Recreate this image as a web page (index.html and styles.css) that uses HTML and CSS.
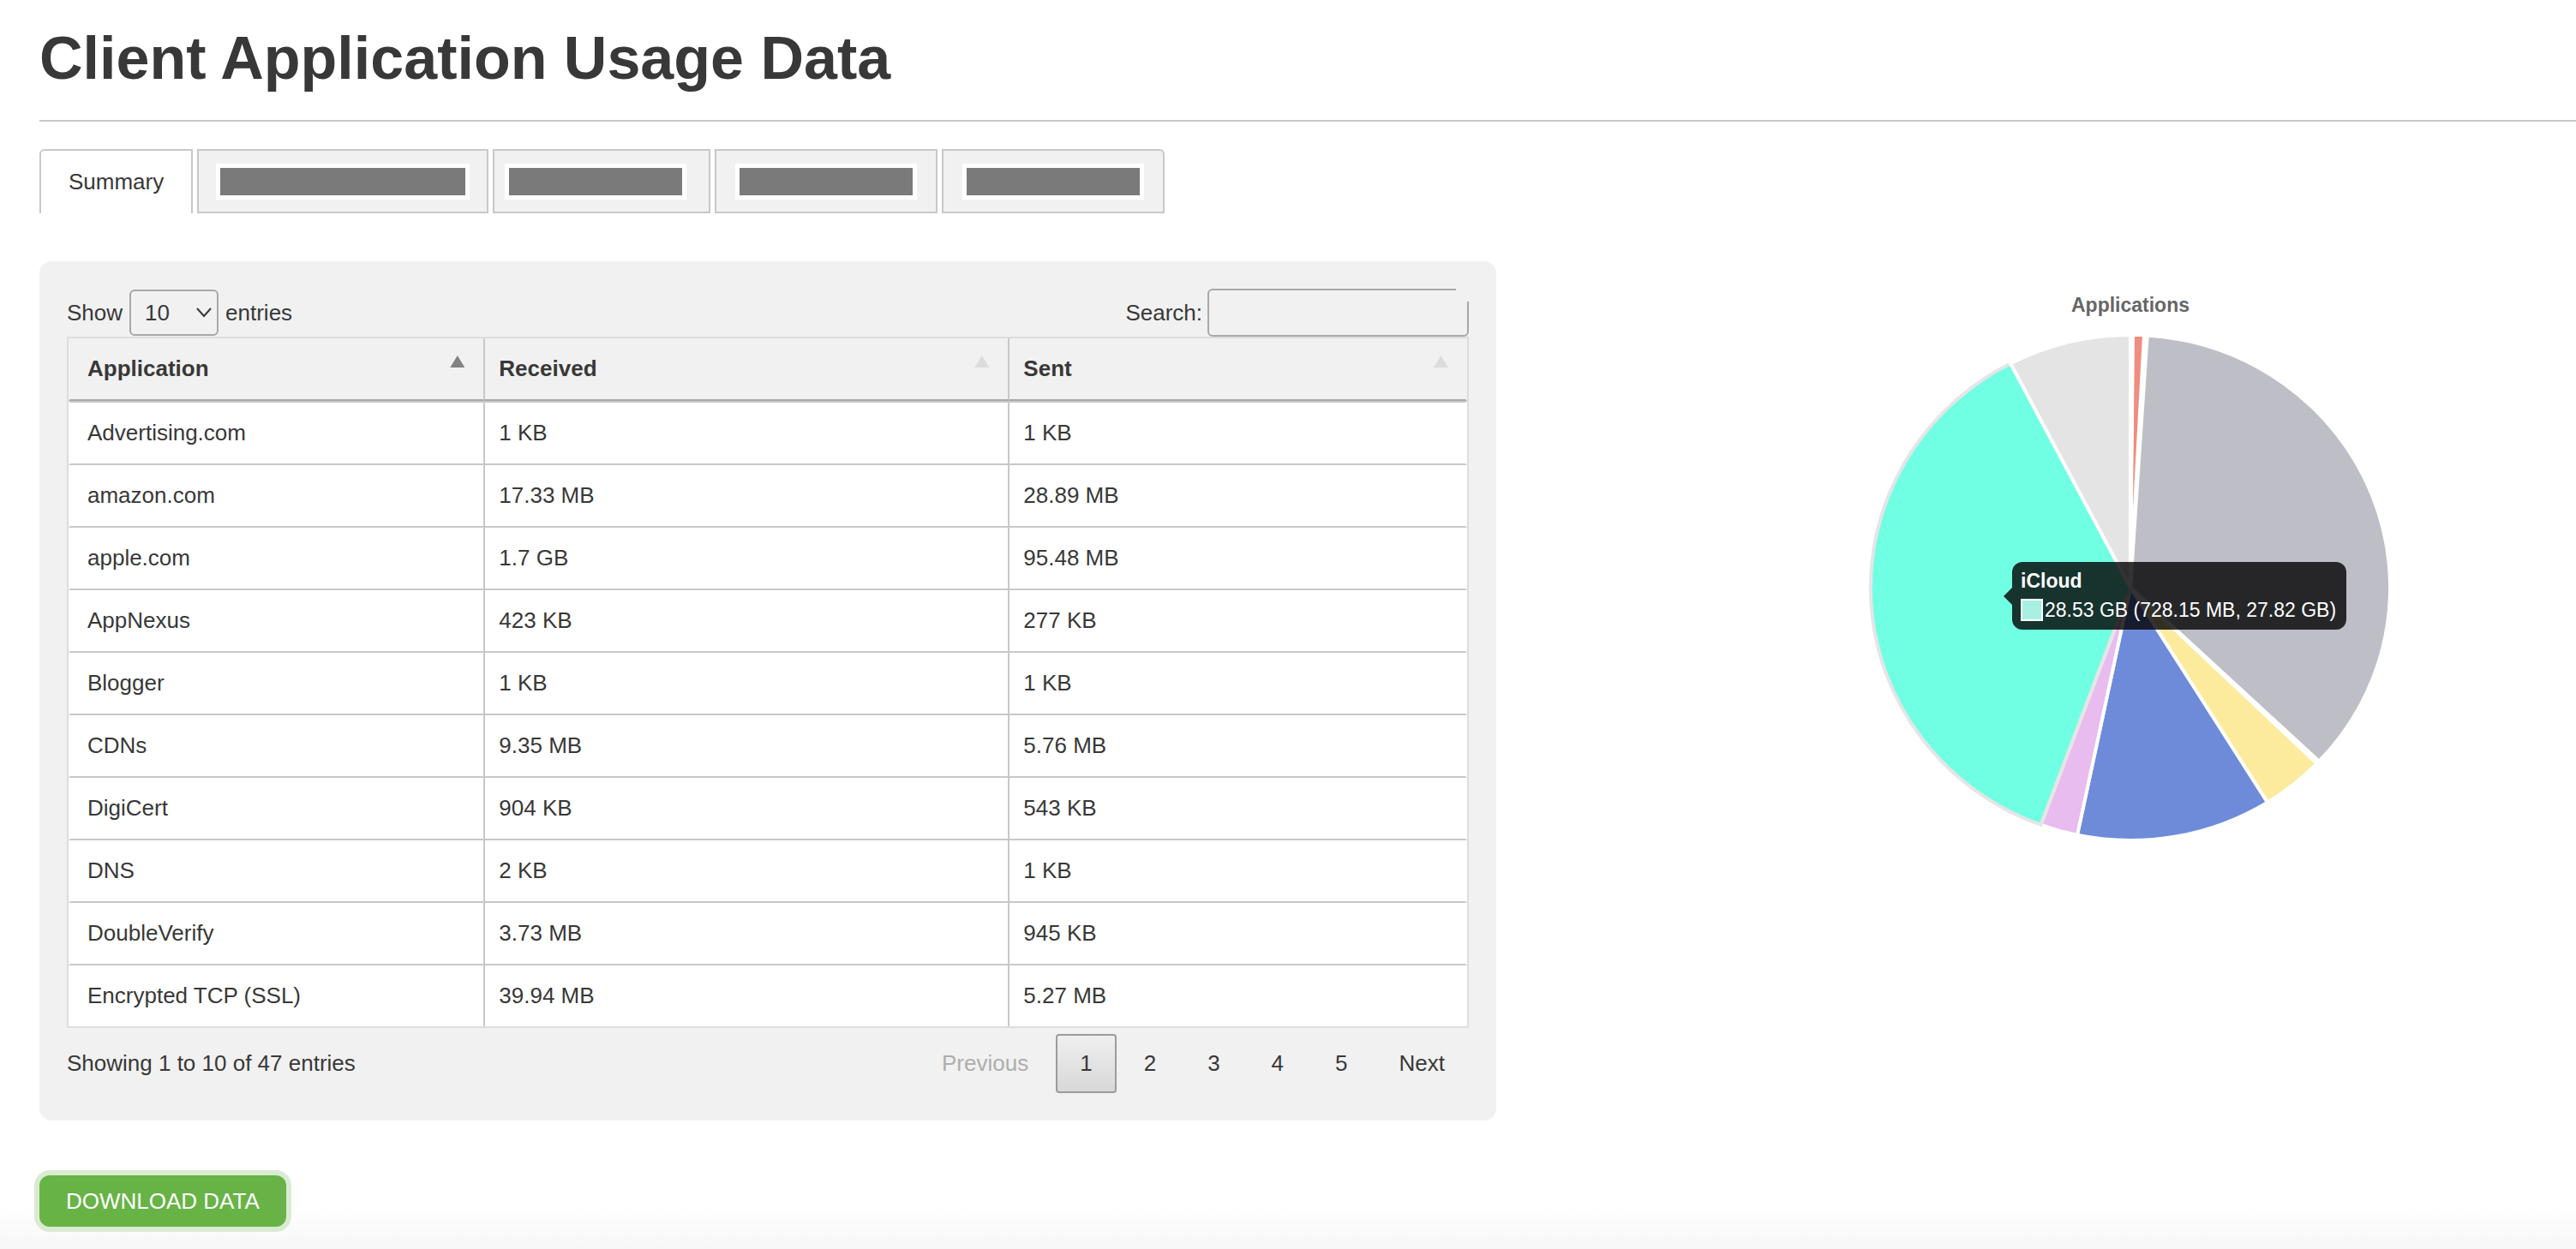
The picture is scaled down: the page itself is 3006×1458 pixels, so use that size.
FILE: index.html
```html
<!DOCTYPE html>
<html lang="en">
<head>
<meta charset="utf-8">
<meta name="viewport" content="width=device-width, initial-scale=1">
<title>Client Application Usage Data</title>
<link rel="stylesheet" href="styles.css">
</head>
<body>
<main class="page">
  <header class="page-header">
    <h1 class="page-title">Client Application Usage Data</h1>
  </header>

  <nav class="tabs">
    <button type="button" class="tab tab-active">Summary</button>
    <button type="button" class="tab tab-long"><span class="redacted redacted-long"></span></button>
    <button type="button" class="tab tab-shifted"><span class="redacted"></span></button>
    <button type="button" class="tab"><span class="redacted"></span></button>
    <button type="button" class="tab"><span class="redacted"></span></button>
  </nav>

  <div class="content">
    <section class="card">
      <div class="toolbar">
        <div class="length">
          <label for="length">Show</label>
          <span class="select-wrap">
            <select id="length" class="select">
              <option selected>10</option>
              <option>25</option>
              <option>50</option>
              <option>100</option>
            </select>
            <svg class="chevron" width="18" height="12" viewBox="0 0 18 12" fill="none" stroke="#383838" stroke-width="2"><path d="M1 1l8 9 8-9"/></svg>
          </span>
          <span>entries</span>
        </div>
        <div class="search">
          <label for="search">Search:</label>
          <span class="search-wrap"><input id="search" class="search-input" type="search"></span>
        </div>
      </div>

      <table class="table">
        <colgroup><col class="col-app"><col class="col-received"><col></colgroup>
        <thead>
          <tr>
            <th scope="col"><button type="button" class="sort sort-active">Application</button></th>
            <th scope="col"><button type="button" class="sort">Received</button></th>
            <th scope="col"><button type="button" class="sort">Sent</button></th>
          </tr>
        </thead>
        <tbody>
          <tr><td>Advertising.com</td><td>1 KB</td><td>1 KB</td></tr>
          <tr><td>amazon.com</td><td>17.33 MB</td><td>28.89 MB</td></tr>
          <tr><td>apple.com</td><td>1.7 GB</td><td>95.48 MB</td></tr>
          <tr><td>AppNexus</td><td>423 KB</td><td>277 KB</td></tr>
          <tr><td>Blogger</td><td>1 KB</td><td>1 KB</td></tr>
          <tr><td>CDNs</td><td>9.35 MB</td><td>5.76 MB</td></tr>
          <tr><td>DigiCert</td><td>904 KB</td><td>543 KB</td></tr>
          <tr><td>DNS</td><td>2 KB</td><td>1 KB</td></tr>
          <tr><td>DoubleVerify</td><td>3.73 MB</td><td>945 KB</td></tr>
          <tr><td>Encrypted TCP (SSL)</td><td>39.94 MB</td><td>5.27 MB</td></tr>
        </tbody>
      </table>

      <div class="footer">
        <div>Showing 1 to 10 of 47 entries</div>
        <div class="pager">
          <button type="button" class="page-button" disabled>Previous</button>
          <button type="button" class="page-button page-current">1</button>
          <button type="button" class="page-button">2</button>
          <button type="button" class="page-button">3</button>
          <button type="button" class="page-button">4</button>
          <button type="button" class="page-button">5</button>
          <button type="button" class="page-button">Next</button>
        </div>
      </div>
    </section>

    <section class="chart">
      <h2 class="chart-title">Applications</h2>
      <div class="chart-body">
        <svg class="pie" viewBox="0 0 620 600" stroke="#fff" stroke-width="4">
          <path fill="#f08c80" d="M310 300L313 5A303 295 0 0 1 326 5Z"/>
          <path fill="#bebec7" d="M310 300L329.700 5.600A303 295 0 0 1 530.200 502.700Z"/>
          <path fill="#fceb9d" d="M310 300L527.600 505.300A303 295 0 0 1 469.900 550.600Z"/>
          <path fill="#6e8bda" d="M310 300L469.900 550.600A303 295 0 0 1 248 588.800Z"/>
          <path fill="#e8bcee" d="M310 300L248 588.800A303 295 0 0 1 205.400 576.900Z"/>
          <path fill="#70ffe3" stroke="#e5e5e5" d="M310 300L205.400 576.900A303 295 0 0 1 170.100 38.300Z"/>
          <path fill="#e4e4e4" d="M310 300L170.100 38.300A303 295 0 0 1 310 5Z"/>
          <path fill="none" d="M310 300L312 5"/>
          <path fill="none" d="M310 300L327.500 5"/>
        </svg>
        <div class="tooltip">
          <strong>iCloud</strong>
          <div class="tooltip-row"><span class="swatch"></span>28.53 GB (728.15 MB, 27.82 GB)</div>
        </div>
      </div>
    </section>
  </div>

  <button type="button" class="download">DOWNLOAD DATA</button>
</main>
</body>
</html>
```
FILE: styles.css
```css
* {
  box-sizing: border-box;
}

body {
  margin: 0;
  min-height: 100vh;
  background: linear-gradient(#fff calc(100% - 50px), #f7f7f7);
  color: #383838;
  font: 26px/31px "Liberation Sans", Arial, sans-serif;
}

button,
input,
select {
  margin: 0;
  font: inherit;
  color: inherit;
}

.page {
  padding: 28px 0 26px 46px;
}

.page-header {
  padding-bottom: 32px;
  border-bottom: 2px solid #c8c8c8;
}

.page-title {
  margin: 0;
  font-size: 70px;
  line-height: 80px;
}

/* Tabs */
.tabs {
  display: flex;
  gap: 5px;
  margin-top: 32px;
}

.tab {
  display: flex;
  align-items: center;
  height: 75px;
  padding: 0 22px;
  border: 2px solid #c8c8c8;
  background: #f1f1f1;
}

.tab:last-child {
  border-top-right-radius: 6px;
}

.tab-active {
  padding: 0 32px;
  border-bottom: 0;
  border-top-left-radius: 6px;
  background: #fff;
}

.tab-long {
  padding: 0 20px;
}

.tab-shifted {
  padding: 0 26px 0 12px;
}

.redacted {
  width: 212px;
  height: 42px;
  border: 5px solid #fff;
  background: #7a7a7a;
}

.redacted-long {
  width: 296px;
}

/* Main area */
.content {
  display: grid;
  grid-template-columns: minmax(0, 85fr) minmax(0, 52fr);
  align-items: start;
  gap: 220px;
  margin-top: 56px;
}

.card {
  padding: 32px;
  border-radius: 14px;
  background: #f1f1f1;
}

.toolbar {
  display: flex;
  justify-content: space-between;
}

.length,
.search {
  display: flex;
  align-items: center;
  gap: 8px;
}

.search {
  gap: 6px;
}

.select-wrap {
  display: grid;
  align-items: center;
}

.select {
  grid-area: 1 / 1;
  width: 104px;
  height: 54px;
  padding: 0 16px;
  border: 2px solid #a8a8a8;
  border-radius: 6px;
  background: transparent;
  appearance: none;
}

.chevron {
  grid-area: 1 / 1;
  justify-self: end;
  margin-right: 8px;
  pointer-events: none;
}

.search-wrap {
  position: relative;
  display: flex;
}

.search-wrap::after {
  content: "";
  position: absolute;
  top: 0;
  right: 0;
  width: 15px;
  height: 15px;
  background: #f1f1f1;
}

.search-input {
  width: 305px;
  height: 56px;
  padding: 0 12px;
  border: 2px solid #a8a8a8;
  border-radius: 6px;
  background: transparent;
  appearance: none;
}

/* Data table */
.table {
  width: 100%;
  table-layout: fixed;
  border: 2px solid #ddd;
  border-collapse: separate;
  border-spacing: 0;
}

.col-app {
  width: 29.8%;
}

.col-received {
  width: 37.5%;
}

.table th {
  padding: 0;
  border-right: 2px solid #c8c8c8;
  border-bottom: 2px solid #a8a8a8;
}

.table td {
  height: 73px;
  padding: 0 16px;
  border-right: 2px solid #c8c8c8;
  border-bottom: 2px solid #c8c8c8;
  background: #fff;
}

.table tbody tr:first-child td {
  height: 75px;
  border-top: 2px solid #c8c8c8;
}

.table tbody tr:last-child td {
  height: 71px;
  border-bottom: 0;
}

.table th:first-child,
.table td:first-child {
  border-left: 2px solid transparent;
}

.table td:first-child {
  padding-left: 20px;
}

.table th:last-child,
.table td:last-child {
  border-right-color: transparent;
}

.sort {
  display: flex;
  justify-content: space-between;
  width: 100%;
  padding: 20px 22px 20px 16px;
  border: 0;
  background: none;
  font-weight: bold;
}

.table th:first-child .sort {
  padding-left: 20px;
}

.table th:last-child .sort {
  padding-right: 20px;
}

.sort::after {
  content: "";
  width: 17px;
  height: 14px;
  background: #dcdcdc;
  clip-path: polygon(50% 0, 100% 100%, 0 100%);
}

.sort-active::after {
  background: #828282;
}

/* Table footer */
.footer {
  display: flex;
  align-items: center;
  justify-content: space-between;
  margin-top: 7px;
}

.pager {
  display: flex;
  gap: 4px;
}

.page-button {
  padding: 17px 26px;
  border: 2px solid transparent;
  border-radius: 4px;
  background: none;
}

.page-button:disabled {
  color: #adadad;
}

.page-current {
  border-color: #9c9c9c;
  background: linear-gradient(#efefef, #d8d8d8);
}

/* Chart */
.chart {
  display: flex;
  flex-direction: column;
  align-items: center;
  padding-top: 37px;
}

.chart-title {
  margin: 0 0 16px;
  color: #666;
  font-size: 23px;
  line-height: 28px;
}

.chart-body {
  position: relative;
  width: 620px;
}

.pie {
  display: block;
  width: 100%;
}

.tooltip {
  position: absolute;
  top: 270px;
  left: 172px;
  display: flex;
  flex-direction: column;
  gap: 6px;
  padding: 8px 12px 9px 10px;
  border-radius: 12px;
  background: rgba(0, 0, 0, 0.8);
  color: #fff;
  font-size: 23px;
  line-height: 28px;
  white-space: nowrap;
}

.tooltip::before {
  content: "";
  position: absolute;
  top: 30px;
  right: 100%;
  width: 10px;
  height: 20px;
  background: rgba(0, 0, 0, 0.8);
  clip-path: polygon(100% 0, 100% 100%, 0 50%);
}

.tooltip-row {
  display: flex;
  align-items: center;
  gap: 2px;
}

.swatch {
  width: 26px;
  height: 26px;
  border: 2px solid #fff;
  background: #a8f0e2;
}

/* Download */
.download {
  display: block;
  height: 60px;
  margin-top: 64px;
  padding: 0 31px;
  border: 0;
  border-radius: 12px;
  background: #68b346;
  box-shadow: 0 0 0 6px #daebd3;
  color: #fff;
}
```
